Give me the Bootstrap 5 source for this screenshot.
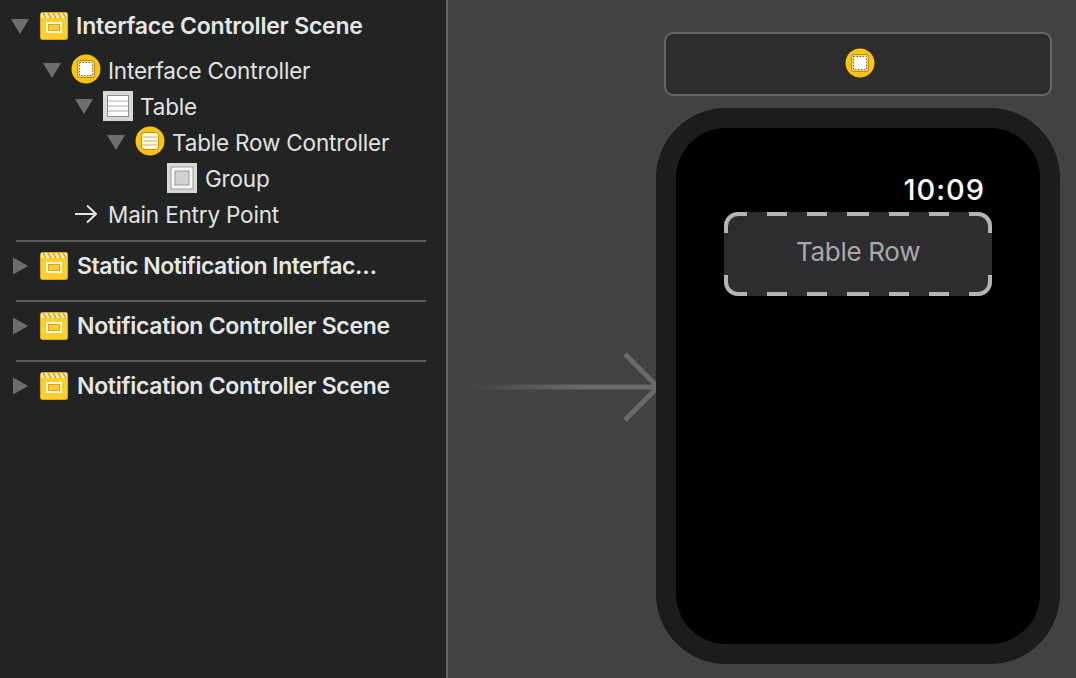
<!DOCTYPE html>
<html lang="en">
<head>
    <meta charset="UTF-8">
    <meta name="viewport" content="width=device-width, initial-scale=1.0">
    <title>Interface Controller Scene</title>
    <link href="https://cdn.jsdelivr.net/npm/bootstrap@5.3.3/dist/css/bootstrap.min.css" rel="stylesheet">
    <style>
        html, body { height: 100%; }
        body { background: #424242; overflow: hidden; font-family: Inter, "Liberation Sans", sans-serif; }
        .app-shell { width: 1076px; height: 678px; }

        /* outline */
        .outline-pane { width: 448px; background: #222424; border-right: 2px solid #666; color: #e2e2e2; padding-top: 8px; }
        .scene-list { padding-bottom: 8px; }
        .outline-row { height: 36px; font-size: 22.5px; letter-spacing: -.18px; white-space: nowrap; gap: 10px; }
        .outline-row span { padding-top: 1px; }
        .outline-row.scene-head { font-size: 23px; font-weight: 600; letter-spacing: -.2px; color: #e6e6e6; }
        .outline-row.head-closed { padding-left: 12px; letter-spacing: -.3px; }
        .outline-row.head-closed .head-tight { letter-spacing: -.5px; }
        .first-head { margin-bottom: 8px; gap: 11px; }
        .outline-sep { height: 2px; background: #5c5c5c; margin: 0 20px 6px 16px; }
        .scene-group { padding-bottom: 16px; }
        .tw { width: 18px; height: 18px; flex: none; }
        .ic { flex: none; display: block; }
        .ic-up2 { margin-bottom: 3px; }
        .ic-up1 { margin-bottom: 2px; }
        .tree-label { margin-left: -3px; }
        .head-label { margin-left: -1px; }
        .lv1 { padding-left: 11px; }
        .lv2 { padding-left: 43px; }
        .lv3 { padding-left: 75px; }
        .lv4 { padding-left: 107px; }
        .lv5 { padding-left: 167px; gap: 8px; }
        .lv-entry { padding-left: 75px; gap: 11px; }

        /* canvas */
        .canvas-pane { position: relative; flex: 1; padding: 32px 0 0 208px; }
        .notif-bar { width: 388px; height: 64px; background: #2d2d2d; border: 2px solid #666; border-radius: 9px; margin-left: 8px; }
        .notif-bar .ic { margin: 0 0 2px 4px; }
        .watch-body { width: 404px; height: 556px; margin-top: 12px; background: #1c1c1c; border-radius: 70px; padding: 20px; }
        .watch-screen { height: 516px; background: #000; border-radius: 50px; padding-top: 47px; }
        .watch-time { color: #fff; font-size: 29px; font-weight: 500; line-height: 30px; letter-spacing: 1px; padding-right: 55px; text-align: right; }
        .row-slot { position: relative; width: 268px; height: 84px; margin: 7px 0 0 48px; padding-bottom: 6px; background: #2d2d2f; border-radius: 14px; color: #a9a9a9; font-size: 26px; letter-spacing: -.3px; }
        .row-dash { position: absolute; inset: 0; }
        .entry-arrow { position: absolute; left: 18px; top: 351px; }
    </style>
</head>
<body>
    <svg width="0" height="0" class="position-absolute">
        <defs>
            <symbol id="tri-down" viewBox="0 0 18 18"><path d="M0 2H18L9 17Z" fill="#6c6e6e"/></symbol>
            <symbol id="tri-right" viewBox="0 0 18 18"><path d="M1 0.500L16 9L1 17.500Z" fill="#6c6e6e"/></symbol>
            <symbol id="scene-ic" viewBox="0 0 28 28">
                <rect x=".5" y=".5" width="27" height="27" rx="2" fill="#fbd02c" stroke="#e3a90e"/>
                <rect x="1" y="1" width="26" height="5" fill="#fdf0bd"/>
                <path d="M3 1l3 5M8 1l3 5M13 1l3 5M18 1l3 5M23 1l3 5" stroke="#e0a520" stroke-width="1.600"/>
                <rect x="6" y="10" width="16" height="11" fill="#fff7d8"/>
                <rect x="8.500" y="12.500" width="11" height="6" fill="#fbd02c" stroke="#d9a320"/>
            </symbol>
            <symbol id="ctrl-ic" viewBox="0 0 30 30">
                <circle cx="15" cy="15" r="14.500" fill="#fcc40f"/>
                <rect x="6.500" y="6.500" width="17" height="17" rx="2" fill="#f0d67a" stroke="#b48c1c"/>
                <rect x="8.500" y="8.500" width="13" height="13" fill="#fff" stroke="#7a6a30" stroke-dasharray="1.500 1.500"/>
            </symbol>
            <symbol id="rowctrl-ic" viewBox="0 0 30 30">
                <circle cx="15" cy="15" r="14.500" fill="#fcc40f"/>
                <rect x="6.500" y="6.500" width="17" height="17" rx="3" fill="#fff6d4" stroke="#b48c1c"/>
                <path d="M8 11H22M8 15H22M8 19H22" stroke="#bdb59a"/>
            </symbol>
            <symbol id="table-ic" viewBox="0 0 30 30">
                <rect width="30" height="30" fill="#d6d8d8"/>
                <rect x="4.500" y="4.500" width="21" height="21" fill="#fff" stroke="#8e9090"/>
                <path d="M5 10H25M5 15H25M5 20H25" stroke="#a8aaaa"/>
            </symbol>
            <symbol id="group-ic" viewBox="0 0 30 30">
                <rect width="30" height="30" fill="#d6d8d8"/>
                <rect x="4" y="4" width="22" height="22" fill="#f6f6f6" stroke="#9a9c9c"/>
                <rect x="8" y="8" width="14" height="14" fill="#d0d2d2" stroke="#9a9c9c"/>
            </symbol>
        </defs>
    </svg>

    <div class="app-shell d-flex">
        <div class="outline-pane flex-shrink-0">
            <div class="scene-list">
                <div class="outline-row scene-head first-head d-flex align-items-center lv1">
                    <svg class="tw"><use href="#tri-down"/></svg>
                    <svg class="ic" width="28" height="28"><use href="#scene-ic"/></svg>
                    <span class="tree-label">Interface Controller Scene</span>
                </div>
                <div class="outline-row d-flex align-items-center lv2">
                    <svg class="tw"><use href="#tri-down"/></svg>
                    <svg class="ic ic-up2" width="30" height="30"><use href="#ctrl-ic"/></svg>
                    <span class="tree-label">Interface Controller</span>
                </div>
                <div class="outline-row d-flex align-items-center lv3">
                    <svg class="tw"><use href="#tri-down"/></svg>
                    <svg class="ic" width="30" height="30"><use href="#table-ic"/></svg>
                    <span class="tree-label">Table</span>
                </div>
                <div class="outline-row d-flex align-items-center lv4">
                    <svg class="tw"><use href="#tri-down"/></svg>
                    <svg class="ic ic-up1" width="30" height="30"><use href="#rowctrl-ic"/></svg>
                    <span class="tree-label">Table Row Controller</span>
                </div>
                <div class="outline-row d-flex align-items-center lv5">
                    <svg class="ic" width="30" height="30"><use href="#group-ic"/></svg>
                    <span>Group</span>
                </div>
                <div class="outline-row d-flex align-items-center lv-entry">
                    <svg class="ic" width="22" height="20" viewBox="0 0 22 20"><path d="M0 10H21M12 1.500L21 10L12 18.500" fill="none" stroke="#e2e2e2" stroke-width="2"/></svg>
                    <span>Main Entry Point</span>
                </div>
            </div>
            <div class="outline-sep"></div>
            <div class="scene-group">
                <div class="outline-row scene-head d-flex align-items-center head-closed">
                    <svg class="tw"><use href="#tri-right"/></svg>
                    <svg class="ic" width="28" height="28"><use href="#scene-ic"/></svg>
                    <span class="head-label head-tight">Static Notification Interfac…</span>
                </div>
            </div>
            <div class="outline-sep"></div>
            <div class="scene-group">
                <div class="outline-row scene-head d-flex align-items-center head-closed">
                    <svg class="tw"><use href="#tri-right"/></svg>
                    <svg class="ic" width="28" height="28"><use href="#scene-ic"/></svg>
                    <span class="head-label">Notification Controller Scene</span>
                </div>
            </div>
            <div class="outline-sep"></div>
            <div class="scene-group">
                <div class="outline-row scene-head d-flex align-items-center head-closed">
                    <svg class="tw"><use href="#tri-right"/></svg>
                    <svg class="ic" width="28" height="28"><use href="#scene-ic"/></svg>
                    <span class="head-label">Notification Controller Scene</span>
                </div>
            </div>
        </div>

        <div class="canvas-pane">
            <div class="notif-bar d-flex align-items-center justify-content-center">
                <svg class="ic" width="30" height="30"><use href="#ctrl-ic"/></svg>
            </div>
            <div class="watch-body">
                <div class="watch-screen">
                    <div class="watch-time">10:09</div>
                    <div class="row-slot d-flex align-items-center justify-content-center">
                        <span>Table Row</span>
                        <svg class="row-dash" width="268" height="84" viewBox="0 0 268 84" fill="none" stroke="#b4b4b4" stroke-width="4">
                            <path d="M2 21V14A12 12 0 0 1 14 2H23M43 2H63M83 2H103M123 2H145M165 2H185M205 2H225M245 2H254A12 12 0 0 1 266 14V21"/>
                            <path d="M2 63V70A12 12 0 0 0 14 82H23M43 82H63M83 82H103M123 82H145M165 82H185M205 82H225M245 82H254A12 12 0 0 0 266 70V63"/>
                        </svg>
                    </div>
                </div>
            </div>
            <svg class="entry-arrow" width="190" height="72" viewBox="0 0 190 72" fill="none">
                <defs>
                    <linearGradient id="shaft" x1="0" y1="0" x2="1" y2="0">
                        <stop offset="0" stop-color="#6a6a6a" stop-opacity="0"/>
                        <stop offset=".6" stop-color="#6a6a6a"/>
                    </linearGradient>
                </defs>
                <rect x="2" y="33.500" width="188" height="5" fill="url(#shaft)"/>
                <path d="M159 3L192 36L159 69" stroke="#6a6a6a" stroke-width="5"/>
            </svg>
        </div>
    </div>
    <script src="https://cdn.jsdelivr.net/npm/bootstrap@5.3.3/dist/js/bootstrap.bundle.min.js"></script>
</body>
</html>
